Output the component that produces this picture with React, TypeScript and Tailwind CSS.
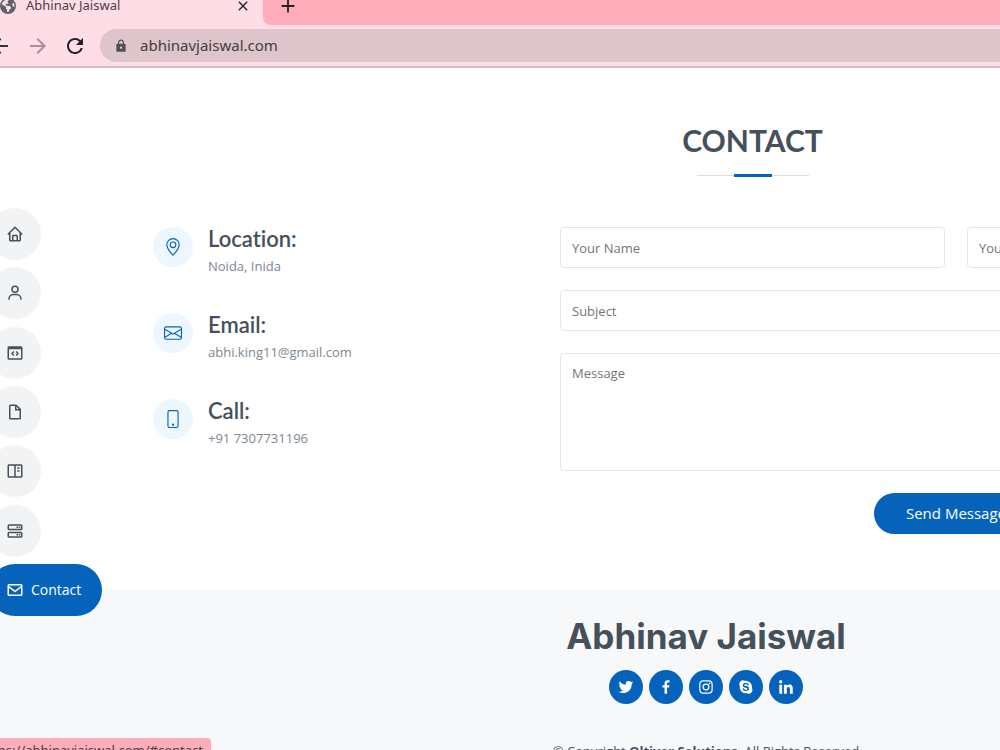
import type { IconType } from 'react-icons';
import {
  BiBookContent,
  BiEnvelope,
  BiHome,
  BiLogoFacebook,
  BiLogoInstagram,
  BiLogoLinkedin,
  BiLogoSkype,
  BiLogoTwitter,
  BiServer,
  BiUser,
} from 'react-icons/bi';
import { BsEnvelope, BsGeoAlt, BsPhone } from 'react-icons/bs';
import { FaEarthAmericas } from 'react-icons/fa6';
import { MdAdd, MdArrowBack, MdArrowForward, MdClose, MdLock, MdRefresh } from 'react-icons/md';

function CodeWindowIcon({ className }: { className?: string }) {
  return (
    <svg viewBox="0 0 24 24" className={className} fill="none" stroke="currentColor" strokeWidth="2">
      <rect x="3" y="4" width="18" height="16" rx="1" />
      <path d="M3 5.5h18" strokeWidth="3" />
      <path d="M10.5 10 8 12.7l2.5 2.7M13.5 10l2.5 2.7-2.5 2.7" strokeWidth="1.9" />
    </svg>
  );
}

function FileIcon({ className }: { className?: string }) {
  return (
    <svg viewBox="0 0 24 24" className={className} fill="none" stroke="currentColor" strokeWidth="2">
      <path d="M13.5 3H6a1 1 0 0 0-1 1v16a1 1 0 0 0 1 1h12a1 1 0 0 0 1-1V8.5L13.5 3z" strokeLinejoin="round" />
      <path d="M13 3v6h6" />
    </svg>
  );
}

const navItems = [
  { label: 'Home', href: '#hero', icon: BiHome },
  { label: 'About', href: '#about', icon: BiUser },
  { label: 'Skills', href: '#skills', icon: CodeWindowIcon },
  { label: 'Resume', href: '#resume', icon: FileIcon },
  { label: 'Portfolio', href: '#portfolio', icon: BiBookContent },
  { label: 'Services', href: '#services', icon: BiServer },
];

const socials = [
  { label: 'Twitter', icon: BiLogoTwitter },
  { label: 'Facebook', icon: BiLogoFacebook },
  { label: 'Instagram', icon: BiLogoInstagram },
  { label: 'Skype', icon: BiLogoSkype },
  { label: 'LinkedIn', icon: BiLogoLinkedin },
];

const fieldClass =
  'w-full rounded border border-[#e4e6e9] bg-white px-[11px] text-[13px] text-[#45505b] placeholder:text-[#757575] outline-none focus:border-[#0563bb]';

function BrowserBar() {
  return (
    <header className="shrink-0 border-b-2 border-[#cfbcc5] bg-[#ffdde6] font-['Noto_Sans',sans-serif]">
      <div className="flex h-[25px] bg-[#ffdde6]">
        <div className="flex h-[11px] w-[263px] shrink-0 items-center pr-3 text-[#4b4045]">
          <FaEarthAmericas className="h-4 w-4 text-[#5f6368]" />
          <span className="ml-[10px] flex-1 text-[13px]">Abhinav Jaiswal</span>
          <button aria-label="Close tab">
            <MdClose className="h-4 w-4 text-[#222]" />
          </button>
        </div>
        <div className="flex-1 rounded-bl-lg bg-[#ffadbb]">
          <button aria-label="New tab" className="ml-[14px] flex h-[11px] items-center">
            <MdAdd className="h-[22px] w-[22px] text-[#222]" />
          </button>
        </div>
      </div>
      <div className="flex h-[41px] items-center">
        <button aria-label="Back" className="-ml-3 text-[#333]">
          <MdArrowBack className="h-6 w-6" />
        </button>
        <button aria-label="Forward" className="ml-[14px] text-[#a98f98]">
          <MdArrowForward className="h-6 w-6" />
        </button>
        <button aria-label="Reload" className="ml-[13px] text-[#222]">
          <MdRefresh className="h-6 w-6" />
        </button>
        <div className="ml-[13px] flex h-[33px] flex-1 items-center rounded-l-full bg-[#dec5cc] pl-[14px]">
          <MdLock className="h-[14px] w-[14px] text-[#4d5156]" />
          <input
            aria-label="Address"
            defaultValue="abhinavjaiswal.com"
            className="ml-3 flex-1 bg-transparent text-[15px] text-[#453b40] outline-none"
          />
        </div>
      </div>
    </header>
  );
}

function SideNav() {
  return (
    <nav className="absolute top-[140px] left-[-11px] z-10 flex h-[408px] flex-col items-start justify-between">
      {navItems.map(({ label, href, icon: Icon }) => (
        <a
          key={label}
          href={href}
          aria-label={label}
          className="flex h-[52px] w-[52px] items-center justify-center rounded-full bg-[#f2f3f5] text-[#45505b]"
        >
          <Icon className="h-[18px] w-[18px]" />
        </a>
      ))}
      <a
        href="#contact"
        className="flex h-[52px] items-center gap-[7px] rounded-full bg-[#0563bb] pr-[21px] pl-[17px] text-sm text-white"
      >
        <BiEnvelope className="h-[18px] w-[18px]" />
        Contact
      </a>
    </nav>
  );
}

function InfoRow({ icon: Icon, title, text }: { icon: IconType; title: string; text: string }) {
  return (
    <div className="flex gap-[15px]">
      <div className="flex h-10 w-10 items-center justify-center rounded-full bg-[#ecf7ff] text-[#0563bb]">
        <Icon className="h-[18px] w-[18px]" />
      </div>
      <div>
        <h4 className="font-['Lato',sans-serif] text-[22px] leading-6 font-semibold text-[#45505b] [font-variant-ligatures:none]">
          {title}
        </h4>
        <p className="mt-[5px] text-[13px] leading-5 text-[#7b8894]">{text}</p>
      </div>
    </div>
  );
}

function ContactSection() {
  return (
    <section id="contact" className="px-[60px] pt-[54px] pb-14 pl-[153px]">
      <div className="flex flex-col items-center">
        <h2 className="font-['Lato',sans-serif] text-[30px] leading-9 font-bold text-[#45505b] uppercase">Contact</h2>
        <div className="mt-4 flex h-[3px] w-[112px] items-center justify-center bg-[linear-gradient(#ddd,#ddd)] bg-[length:100%_1px] bg-center bg-no-repeat">
          <span className="h-[3px] w-[38px] bg-[#0563bb]" />
        </div>
      </div>

      <div className="mt-[50px] flex">
        <div className="flex w-[407px] shrink-0 flex-col gap-[37px]">
          <InfoRow icon={BsGeoAlt} title="Location:" text="Noida, Inida" />
          <InfoRow icon={BsEnvelope} title="Email:" text="abhi.king11@gmail.com" />
          <InfoRow icon={BsPhone} title="Call:" text="+91 7307731196" />
        </div>

        <form className="flex flex-1 flex-col gap-[22px]" onSubmit={(e) => e.preventDefault()}>
          <div className="grid grid-cols-2 gap-[22px]">
            <input type="text" aria-label="Your Name" placeholder="Your Name" className={`${fieldClass} h-[41px]`} />
            <input type="email" aria-label="Your Email" placeholder="Your Email" className={`${fieldClass} h-[41px]`} />
          </div>
          <input type="text" aria-label="Subject" placeholder="Subject" className={`${fieldClass} h-[41px]`} />
          <textarea
            aria-label="Message"
            placeholder="Message"
            className={`${fieldClass} h-[118px] resize-none py-[10px]`}
          />
          <button
            type="submit"
            className="h-[41px] self-center rounded-full bg-[#0563bb] px-8 text-[15px] text-white"
          >
            Send Message
          </button>
        </form>
      </div>
    </section>
  );
}

function Footer() {
  return (
    <footer className="flex flex-1 flex-col items-center bg-[#f7f8fa] pt-6 text-[#45505b]">
      <h3 className="font-['Inter',sans-serif] text-[35px] leading-[44px] font-bold">Abhinav Jaiswal</h3>
      <div className="mt-3 flex gap-[6px]">
        {socials.map(({ label, icon: Icon }) => (
          <a
            key={label}
            href="#"
            aria-label={label}
            className="flex h-[34px] w-[34px] items-center justify-center rounded-full bg-[#0563bb] text-white"
          >
            <Icon className="h-[18px] w-[18px]" />
          </a>
        ))}
      </div>
      <p className="mt-[37px] text-[13px] leading-5 whitespace-nowrap">
        © Copyright <strong>Oltiver Solutions</strong>. All Rights Reserved
      </p>
    </footer>
  );
}

export default function App() {
  return (
    <div className="flex h-screen flex-col overflow-hidden bg-white font-['Open_Sans',sans-serif]">
      <BrowserBar />
      <div className="relative flex-1 overflow-hidden">
        <SideNav />
        <main className="flex h-full min-w-[1412px] flex-col">
          <ContactSection />
          <Footer />
        </main>
        <div className="absolute bottom-0 left-0 flex h-3 w-[211px] justify-end overflow-hidden rounded-tr bg-[#ffadbb] pt-[2px] pr-2 font-['Noto_Sans',sans-serif] text-[13px] leading-5 whitespace-nowrap text-[#4b3a40]">
          https://abhinavjaiswal.com/#contact
        </div>
      </div>
    </div>
  );
}
